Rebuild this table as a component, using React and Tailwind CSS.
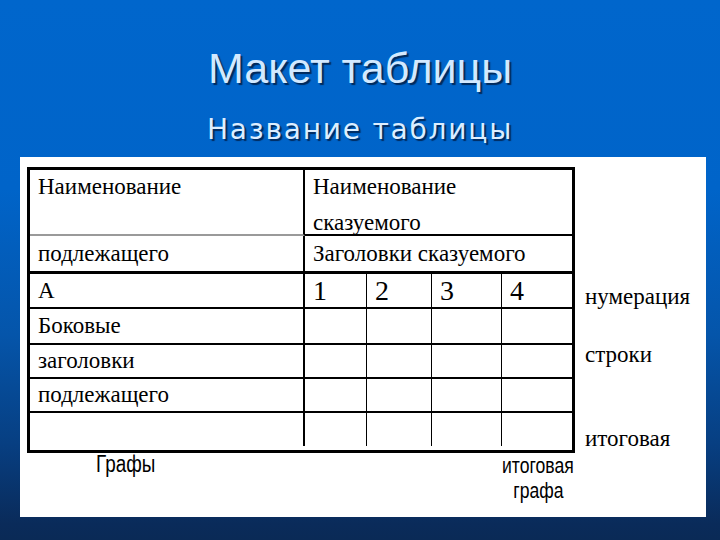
import React from "react";

const serif = { fontFamily: '"Liberation Serif", "Times New Roman", serif' };
const sans = { fontFamily: '"Liberation Sans", Arial, sans-serif' };

function Cell({ w, right, children, className = "" }) {
  return (
    <div
      className={`h-full flex items-center pl-[8px] ${right ? "border-r border-black" : ""} ${className}`}
      style={{ width: w }}
    >
      {children}
    </div>
  );
}

function BodyCols({ digits }) {
  const widths = [62, 65, 70, 70];
  return (
    <div className="flex h-full">
      {widths.map((w, i) => (
        <Cell key={i} w={w} right={i < 3} className="pl-[7px]">
          {digits && <span className="text-[28px] leading-none">{i + 1}</span>}
        </Cell>
      ))}
    </div>
  );
}

function Row({ h, border = "border-b-2 border-black", stub, children }) {
  return (
    <div className={`flex ${border}`} style={{ height: h }}>
      <div className="w-[275px] shrink-0 border-r-2 border-black flex items-center pl-[8px]">
        {stub}
      </div>
      <div className="flex-1 h-full">{children}</div>
    </div>
  );
}

function Table() {
  return (
    <div className="w-[548px] border-[3px] border-black text-black text-[23px] leading-[28px]" style={serif}>
      {/* шапка */}
      <div className="flex h-[66px]">
        <div className="w-[275px] shrink-0 border-r-2 border-b-2 border-r-black border-b-[#9a9a9a] pl-[8px] pt-[3px]">
          Наименование
        </div>
        <div className="flex-1 border-b-2 border-black pl-[8px] pt-[3px]">
          <div>Наименование</div>
          <div className="mt-[8px]">сказуемого</div>
        </div>
      </div>
      <Row h={38} border="border-b-[3px] border-black" stub="подлежащего">
        <div className="h-full flex items-center pl-[8px]">Заголовки сказуемого</div>
      </Row>
      <Row h={35} stub="А">
        <BodyCols digits />
      </Row>
      <Row h={36} stub="Боковые">
        <BodyCols />
      </Row>
      <Row h={34} stub="заголовки">
        <BodyCols />
      </Row>
      <Row h={34} stub="подлежащего">
        <BodyCols />
      </Row>
      <Row h={33} border="" stub="">
        <BodyCols />
      </Row>
    </div>
  );
}

export default function App() {
  return (
    <div className="w-[720px] h-[540px] overflow-hidden flex flex-col bg-[linear-gradient(to_bottom,#0066cc_0%,#0064c9_35%,#0555aa_62%,#073f82_82%,#0a2b5a_97%,#0a2a56_100%)]">
      <h1
        className="pt-[47px] text-center text-[43px] leading-none text-[#d2e9ff] [text-shadow:2px_2px_1px_#002a5c]"
        style={sans}
      >
        Макет таблицы
      </h1>
      <h2
        className="mt-[26px] text-center text-[28px] leading-none tracking-[1.8px] text-[#dceeff] [text-shadow:2px_2px_1px_#002a5c]"
        style={{ fontFamily: '"DejaVu Sans", Verdana, sans-serif' }}
      >
        Название таблицы
      </h2>
      <div className="mt-[13px] ml-[20px] w-[686px] h-[360px] bg-white pt-[10px] pl-[7px]">
        <div className="flex">
          <Table />
          <div className="ml-[10px] flex flex-col text-black text-[23px] leading-[28px]" style={serif}>
            <div className="mt-[116px]">нумерация</div>
            <div className="mt-[30px]">строки</div>
            <div className="mt-[56px]">итоговая</div>
          </div>
        </div>
        <div className="flex items-start text-black" style={sans}>
          <div className="ml-[69px] text-[23px] leading-[23px] inline-block origin-left scale-x-[0.82]">Графы</div>
          <div className="ml-[330px] w-[80px] flex flex-col items-center text-[22px] leading-[25px]">
            <span className="inline-block scale-x-[0.8]">итоговая</span>
            <span className="inline-block scale-x-[0.8]">графа</span>
          </div>
        </div>
      </div>
    </div>
  );
}
